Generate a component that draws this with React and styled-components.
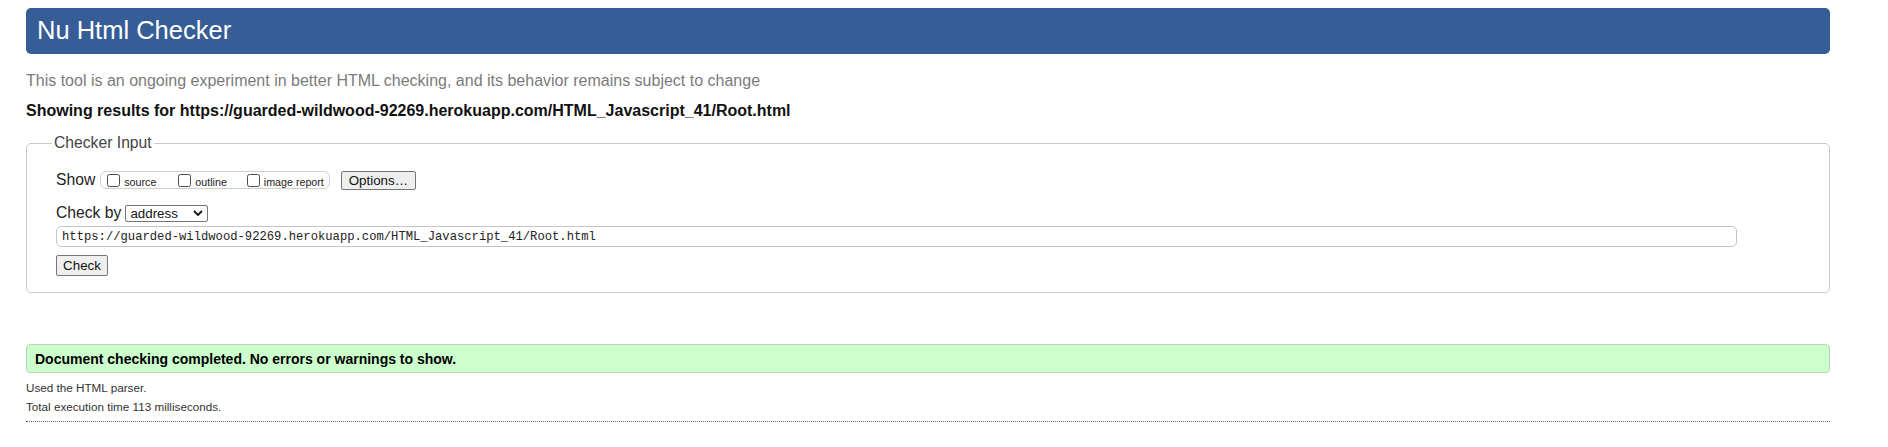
import React from "react";
import styled, { createGlobalStyle } from "styled-components";

const GlobalStyle = createGlobalStyle`
  html, body { margin: 0; padding: 0; background: #ffffff; }
  body { font-family: "Liberation Sans", Arial, sans-serif; color: #222; }
`;

const Page = styled.div`
  width: 1804px;
  margin-left: 26px;
  padding-top: 8px;
  display: flex;
  flex-direction: column;
`;

const Header = styled.h1`
  margin: 0;
  height: 46px;
  box-sizing: border-box;
  padding: 0 0 2px 11px;
  display: flex;
  align-items: center;
  background: #365d95;
  border-radius: 5px;
  color: #ffffff;
  font-size: 25.5px;
  font-weight: normal;
`;

const Lead = styled.p`
  margin: 17px 0 0 0;
  font-size: 16px;
  line-height: 19px;
  color: #7b7b7b;
`;

const Results = styled.p`
  margin: 11px 0 0 0;
  font-size: 16px;
  line-height: 19px;
  font-weight: bold;
  color: #111;
`;

const Fieldset = styled.fieldset`
  margin: 14px 0 0 0;
  padding: 18px 0 16px 29px;
  border: 1px solid #c9c9c9;
  border-radius: 5px;
  display: flex;
  flex-direction: column;
  min-width: 0;
`;

const Legend = styled.legend`
  margin-left: -4px;
  padding: 0 2px;
  font-size: 15.7px;
  line-height: 18px;
  color: #444;
`;

const Row = styled.div`
  display: flex;
  align-items: center;
  height: ${(p) => p.$h}px;
  margin-top: ${(p) => p.$mt || 0}px;
`;

const RowLabel = styled.span`
  font-size: 15.7px;
  color: #222;
  margin-right: ${(p) => p.$mr}px;
  line-height: 18px;
`;

const Pill = styled.div`
  display: flex;
  align-items: center;
  height: 18px;
  box-sizing: border-box;
  padding: 0 5px 0 6px;
  border: 1px solid #cfcfcf;
  border-radius: 6px;
  margin-right: 11px;
`;

const CheckLabel = styled.label`
  display: flex;
  align-items: center;
  gap: 4px;
  margin-right: ${(p) => p.$mr || 0}px;
  font-size: 10.7px;
  color: #222;
`;

const Box = styled.input`
  appearance: none;
  margin: 0;
  width: 13px;
  height: 13px;
  box-sizing: border-box;
  border: 1px solid #4d4d4d;
  border-radius: 2.5px;
  background: #fff;
`;

const CheckText = styled.span`
  line-height: 12px;
  padding-top: 3px;
`;

const Button = styled.button`
  width: ${(p) => p.$w}px;
  height: ${(p) => p.$h}px;
  box-sizing: border-box;
  margin: 0;
  padding: 0;
  border: 1px solid #767676;
  border-radius: 2px;
  background: #efefef;
  font-family: "Liberation Sans", Arial, sans-serif;
  font-size: 13.33px;
  color: #111;
`;

const SelectBox = styled.div`
  width: 83px;
  height: 17px;
  box-sizing: border-box;
  border: 1px solid #767676;
  border-radius: 2px;
  background: #fff;
  display: flex;
  align-items: center;
  justify-content: space-between;
  padding: 0 4px 0 4px;
  font-size: 13.33px;
  color: #111;
`;

const UrlInput = styled.div`
  margin-top: 4px;
  width: 1681px;
  height: 21px;
  box-sizing: border-box;
  border: 1px solid #c4c4c4;
  border-radius: 5px;
  padding-left: 5px;
  display: flex;
  align-items: center;
  font-family: "Liberation Mono", "DejaVu Sans Mono", monospace;
  font-size: 12.2px;
  color: #222;
`;

const ButtonRow = styled.div`
  margin-top: 8px;
  display: flex;
`;

const Success = styled.div`
  margin-top: 51px;
  height: 29px;
  box-sizing: border-box;
  border: 1px solid #b9d4b9;
  border-radius: 4px;
  background: #ccffcc;
  padding-left: 8px;
  display: flex;
  align-items: center;
  font-size: 14px;
  font-weight: bold;
  color: #000;
`;

const Details = styled.div`
  margin-top: 5px;
  padding-bottom: 5px;
  border-bottom: 1px dotted #666;
`;

const Note = styled.p`
  margin: 0;
  font-size: 11.7px;
  line-height: 19px;
  color: #333;
`;

function Chevron() {
  return (
    <svg width="10" height="6" viewBox="0 0 10 6" aria-hidden="true">
      <path d="M1 1 L5 5 L9 1" fill="none" stroke="#111" strokeWidth="1.8" strokeLinejoin="miter" />
    </svg>
  );
}

export default function App() {
  return (
    <>
      <GlobalStyle />
      <Page>
        <Header>Nu Html Checker</Header>
        <Lead>This tool is an ongoing experiment in better HTML checking, and its behavior remains subject to change</Lead>
        <Results>Showing results for https://guarded-wildwood-92269.herokuapp.com/HTML_Javascript_41/Root.html</Results>
        <Fieldset>
          <Legend>Checker Input</Legend>
          <Row $h={20}>
            <RowLabel $mr={5}>Show</RowLabel>
            <Pill>
              <CheckLabel $mr={22}>
                <Box type="checkbox" />
                <CheckText>source</CheckText>
              </CheckLabel>
              <CheckLabel $mr={20}>
                <Box type="checkbox" />
                <CheckText>outline</CheckText>
              </CheckLabel>
              <CheckLabel>
                <Box type="checkbox" />
                <CheckText>image report</CheckText>
              </CheckLabel>
            </Pill>
            <Button type="button" $w={75} $h={19}>Options…</Button>
          </Row>
          <Row $h={18} $mt={14}>
            <RowLabel $mr={4}>Check by</RowLabel>
            <SelectBox>
              <span>address</span>
              <Chevron />
            </SelectBox>
          </Row>
          <UrlInput>https://guarded-wildwood-92269.herokuapp.com/HTML_Javascript_41/Root.html</UrlInput>
          <ButtonRow>
            <Button type="button" $w={52} $h={21}>Check</Button>
          </ButtonRow>
        </Fieldset>
        <Success>Document checking completed. No errors or warnings to show.</Success>
        <Details>
          <Note>Used the HTML parser.</Note>
          <Note>Total execution time 113 milliseconds.</Note>
        </Details>
      </Page>
    </>
  );
}
